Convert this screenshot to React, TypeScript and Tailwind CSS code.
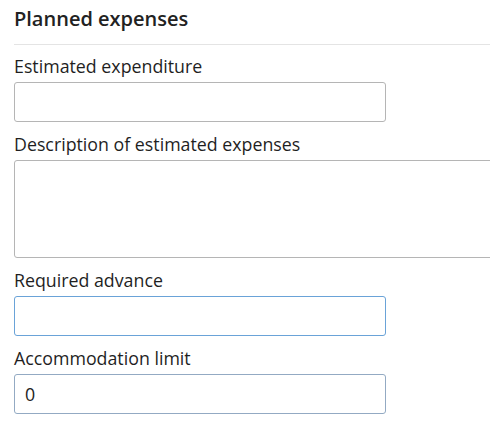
import React from "react";

export default function App() {
  const font = { fontFamily: '"Open Sans", "Noto Sans", sans-serif' };
  return (
    <div className="w-[490px] h-[427px] overflow-hidden bg-white text-[#1f1f1f]" style={font}>
      <div className="w-[560px] pl-[14px]">
        <h2 className="pt-[5px] pb-[11px] text-[20px] leading-[28px] font-semibold text-[#222]">Planned expenses</h2>
        <div className="h-px bg-[#e4e4e4]" />
        <div className="mt-[9px] flex flex-col gap-[10px]">
          <div>
            <label className="block text-[17.8px] leading-6 mb-1">Estimated expenditure</label>
            <input className="block w-[372px] h-10 border border-[#b5b5b5] rounded-[3px] px-[10px] text-[17.8px] outline-none" />
          </div>
          <div>
            <label className="block text-[17.8px] leading-6 mb-1">Description of estimated expenses</label>
            <textarea className="block w-[520px] h-[98px] border border-[#b5b5b5] rounded-[3px] px-[10px] text-[17.8px] outline-none resize-none" />
          </div>
          <div>
            <label className="block text-[17.8px] leading-6 mb-1">Required advance</label>
            <input className="block w-[372px] h-10 border border-[#6aa3d8] rounded-[3px] px-[10px] text-[17.8px] outline-none" />
          </div>
          <div>
            <label className="block text-[17.8px] leading-6 mb-1">Accommodation limit</label>
            <input defaultValue="0" className="block w-[372px] h-10 border border-[#93aac3] rounded-[3px] px-[10px] text-[17.8px] text-[#222] outline-none" />
          </div>
        </div>
      </div>
    </div>
  );
}
